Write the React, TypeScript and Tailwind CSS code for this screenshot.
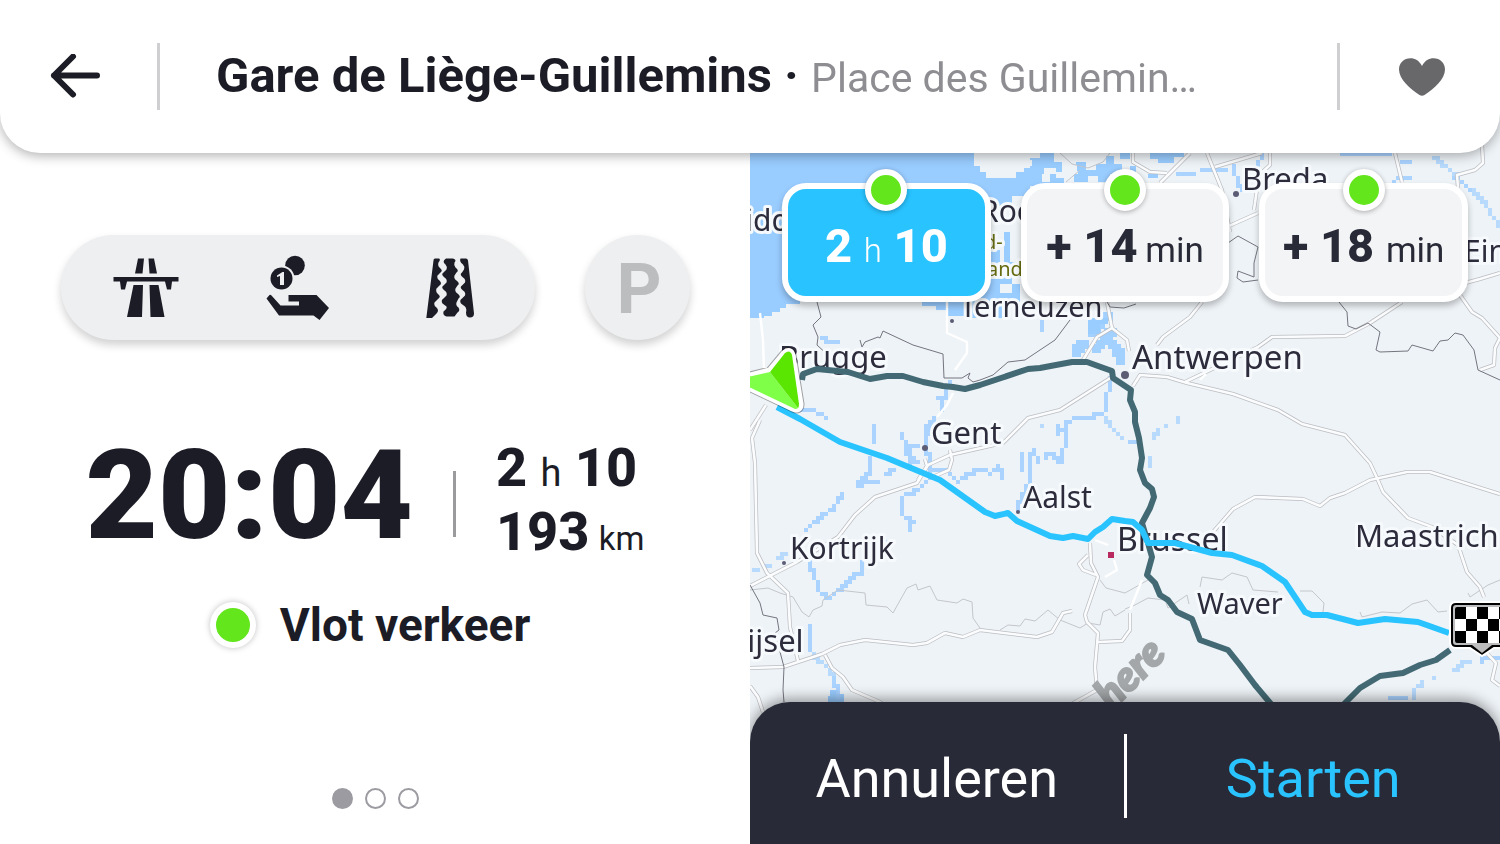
import { useState } from "react";

const CELL = 4;

// Walks along a line and snaps every step to a coarse grid, like the water tiles
function waterCells(line: string, size: number) {
  const pts = line.split(" ").map((p) => p.split(",").map(Number));
  const cells = new Set<string>();
  for (let i = 0; i < pts.length - 1; i++) {
    const [x1, y1] = pts[i];
    const [x2, y2] = pts[i + 1];
    const steps = Math.max(1, Math.ceil(Math.hypot(x2 - x1, y2 - y1) / 3));
    for (let s = 0; s <= steps; s++) {
      const x = x1 + ((x2 - x1) * s) / steps;
      const y = y1 + ((y2 - y1) * s) / steps;
      cells.add(`${Math.floor(x / CELL) * CELL} ${Math.floor(y / CELL) * CELL}`);
    }
  }
  return [...cells].map((c) => `M${c}h${size}v${size}h-${size}z`).join("");
}

const rivers = [
  "1110,379 1107,395 1106,411 1090,418 1070,420",
  "1056,424 1058,432 1066,430 1068,422",
  "1067,422 1066,443 1062,452 1060,462 1052,452 1046,452 1046,458",
  "1032,450 1030,480 1022,498 1017,508",
  "963,478 972,472 983,468 990,474 997,466 1003,476",
  "1020,468 1023,455",
  "1033,450 1038,460",
  "929,420 925,440 928,455 930,477 917,490 900,498 903,515 912,520 910,530",
  "902,433 907,453 917,460 908,464",
  "892,470 887,475",
  "916,444 906,450 910,458",
  "930,470 945,470 958,480",
  "875,427 873,440",
  "870,456 868,473 857,485 877,482",
  "949,383 944,396",
  "934,416 930,432",
  "843,495 832,510 817,520 805,530",
  "810,563 820,593 828,598 845,585 860,572 863,563",
  "808,625 810,650",
  "835,677 837,698",
  "803,410 812,410 827,418",
  "822,338 830,343 836,343",
  "936,396 942,396 943,408",
  "1129,441 1138,441",
  "1455,178 1462,180 1470,190",
  "1235,165 1236,178 1242,190",
  "1262,153 1255,170",
  "1178,175 1195,175",
  "1202,171 1224,169",
  "1340,154 1388,154",
  "1400,162 1411,163",
  "1394,180 1410,178",
  "1391,697 1404,697",
  "1480,660 1500,658",
  "1040,322 1041,330",
];

const streams = [
  "787,552 778,558",
  "768,564 766,566",
  "755,570 757,571",
  "880,548 890,540",
  "1104,416 1112,428",
  "1118,434 1120,436",
  "812,655 827,667 835,677",
  "1152,438 1158,430",
  "1165,426 1167,424",
  "1176,418 1177,420",
  "1040,424 1042,426",
  "1432,156 1445,166 1456,174",
  "1470,190 1484,203 1496,222 1500,226",
  "1468,660 1455,670",
  "1435,676 1433,678",
  "1422,683 1414,688 1412,696",
  "1149,458 1150,464",
];

const estuary = [
  "1072,348 1080,340",
  "1088,330 1096,322",
  "1100,312 1104,314",
  "1094,344 1104,338 1114,346 1118,356",
  "1102,332 1108,330",
];

const roads = [
  "1112,377 1060,410 1028,418 1003,443 950,455 928,465 917,483 875,497 855,515 838,537 797,562 750,586",
  "950,450 952,460 949,470 935,476",
  "925,459 927,466 918,480",
  "760,420 752,438 755,463 757,553 767,573 788,593 790,627 798,661",
  "750,430 766,405",
  "750,668 783,667 822,654 840,645 865,640 913,645 927,643 945,633 963,637 980,630 1037,637 1052,632 1063,613 1072,611",
  "825,655 832,668 843,677 852,690 880,702 890,710",
  "750,686 758,697 763,712",
  "1090,543 1091,563 1098,577 1085,615 1087,622 1098,633 1095,667 1097,690 1070,705",
  "1088,555 1079,564 1083,570 1096,575",
  "1098,642 1122,641 1130,630 1130,613",
  "1133,386 1140,375 1167,377 1187,383 1233,394 1278,410 1302,424 1345,435 1370,463 1377,478 1383,492 1408,518 1432,527 1458,545 1467,572 1480,587 1484,597",
  "1213,532 1233,509 1255,497 1303,499 1320,506 1330,498 1345,493 1370,480 1407,472 1430,472 1500,494",
  "1185,382 1258,347 1272,337 1345,336 1370,323 1402,302",
  "1157,345 1163,337 1190,317 1202,302",
  "1460,295 1472,312 1482,318 1500,338 1495,348 1494,365 1480,370",
  "1465,283 1480,279 1500,273",
  "1207,153 1222,190 1230,232",
  "1229,226 1258,213",
  "1270,153 1270,165 1259,175 1254,210",
  "1482,145 1483,163 1475,170 1457,175 1458,188",
  "1395,153 1402,182",
  "1133,153 1133,162 1150,172 1167,173",
  "1160,183 1190,153",
  "1215,167 1262,153",
  "1107,302 1112,328 1097,337 1083,360",
  "1112,328 1127,340 1129,351",
  "1484,650 1496,663 1492,680 1500,686",
];

const whiteRoads = [
  "947,302 947,333 967,342 967,353 955,370",
  "953,393 947,405 937,417",
  "760,313 763,340 764,370",
  "1200,380 1206,374",
  "1095,540 1108,545",
  "1130,610 1142,580",
  "1105,577 1117,570 1114,560",
];

const borders = [
  "817,302 821,317 813,325 818,337 817,345 830,357",
  "860,340 862,347 865,342 878,337 880,338 883,331 913,345 943,354 944,378 962,378 970,373 968,378 973,382 980,380 993,375 1008,362 1025,360 1055,340 1070,320",
  "1107,302 1110,307 1124,308 1136,304",
  "1339,302 1347,312 1348,326 1356,329 1368,323 1380,332 1376,350 1380,352 1408,351 1412,345 1433,351 1440,341 1448,340 1455,333 1463,335 1474,350 1478,370 1500,380",
  "1228,243 1238,236 1258,247 1254,263 1254,277 1238,271 1237,278 1243,282 1258,280",
  "750,585 760,603 763,615 777,618 779,630 775,633 784,667 783,690 784,702",
];

const provinces = [
  "1060,153 1072,164 1088,168 1103,162 1110,153",
  "1066,182 1080,170",
  "750,590 768,588 780,593 793,597 802,612 809,617 813,610 822,606 823,600 838,590 865,593 866,605 887,607 893,613 907,588 916,584 918,590 930,586 937,600 957,603 963,599 972,602 973,618 980,628",
  "1000,630 1008,625 1020,626 1025,619 1035,621 1048,610 1060,620 1080,628 1088,623 1100,625 1103,612 1110,609 1115,616 1125,610",
  "1100,580 1106,588 1125,593 1148,580",
  "1125,609 1135,605 1148,598 1165,600 1168,608 1187,595 1189,604",
  "1200,587 1202,577 1222,580 1232,573 1247,577 1253,590 1278,592",
  "1300,591 1312,591 1324,603 1323,612",
  "1360,612 1362,617 1382,612 1400,613 1412,604 1427,600 1438,612 1447,611",
  "1468,593 1470,597 1488,585 1500,580",
];

const altRoutes = [
  "802,380 803,374 817,369 848,372 870,379 887,376 903,376 923,382 943,386 953,387 965,389 980,385 1028,369 1040,368 1072,362 1087,362 1112,371 1113,378 1125,386 1131,390 1130,400 1135,412 1135,422 1139,438 1142,458 1140,470 1145,483 1152,489 1154,497 1150,508 1142,523 1148,543 1152,557 1147,575 1155,583 1160,595 1168,600 1177,612 1192,619 1200,640 1228,650 1240,665 1255,685 1276,710",
  "1338,710 1360,688 1380,676 1403,673 1420,665 1436,660 1450,650",
];

const mainRoute =
  "777,407 800,419 840,442 887,458 940,480 985,512 995,516 1008,513 1017,521 1050,536 1063,538 1073,536 1088,539 1095,532 1103,527 1112,519 1125,521 1133,522 1142,530 1148,543 1175,543 1212,553 1232,555 1262,566 1285,582 1305,612 1312,615 1327,615 1358,623 1385,619 1418,622 1449,633";

const cities = [
  { name: "Midd", x: 718, y: 231, size: 30 },
  { name: "Roo", x: 980, y: 222, size: 30 },
  { name: "Breda", x: 1242, y: 190, size: 31 },
  { name: "Ein", x: 1464, y: 262, size: 30 },
  { name: "Terneuzen", x: 960, y: 317, size: 29 },
  { name: "Brugge", x: 779, y: 368, size: 31 },
  { name: "Antwerpen", x: 1132, y: 369, size: 33 },
  { name: "Gent", x: 931, y: 444, size: 31 },
  { name: "Aalst", x: 1023, y: 508, size: 30 },
  { name: "Kortrijk", x: 790, y: 559, size: 30 },
  { name: "Brussel", x: 1117, y: 551, size: 32 },
  { name: "Maastrich", x: 1355, y: 547, size: 31 },
  { name: "Waver", x: 1197, y: 614, size: 29 },
  { name: "Rijsel", x: 728, y: 652, size: 31 },
];

const cityDots = [
  [1236, 194, 3],
  [952, 321, 2],
  [1125, 375, 4],
  [925, 448, 3],
  [1018, 512, 2],
  [784, 563, 2],
];

function RouteMap() {
  return (
    <svg
      viewBox="750 113 750 731"
      preserveAspectRatio="xMidYMid slice"
      className="absolute inset-0 h-full w-full"
      role="img"
      aria-label="Routekaart"
    >
      <rect x="0" y="0" width="2250" height="1200" fill="#eef3f7" />

      {/* Sea and estuaries */}
      <g fill="#99ccff" shapeRendering="crispEdges">
        <path d="M0 0H978V160H974V166H980V172H986V178H1000V172H1024V168H1030V158H1040V153H1054V162H1062V172H1056V178H1064V186H1030V196H1012V206H990V250H1000V276H1012V284H1020V302H1002V318H964V316H948V310H936V306H922V296H800V304H786V308H780V312H772V316H764V318H0Z" />
        <path d="M1004 232h6v30h6v6h-12z" />
        <path d="M1076 162h10v8h10v-6h10v-8h8v8h8v8h6v10h-10v-8h-8v8h-12v-6h-10v6h-14v-8h4z" />
        <path d="M1120 153h10v6h-10zM1150 153h34v4h-10v6h-16v-4h-8zM1148 174h10v4h-10zM1130 166h6v10h-6z" />
        <path d="M1088 318h20v6h-8v10h-12z" />
        <path d="M830 690h8v4h6v8h-16v-6h2z" />
      </g>
      <g fill="#eef3f7" shapeRendering="crispEdges">
        <path d="M974 153H1026V160H1032V166H1022V172H1016V178H1000V174H992V170H982V164H974Z" />
        <path d="M1044 168h12v6h-6v8h-8v-8h2z" />
        <path d="M1012 228h8v34h-8z M1000 284h12v9h-12z" />
      </g>

      <g fill="#a3d0ff" opacity="0.9">
        {rivers.map((r) => (
          <path key={r} d={waterCells(r, 4)} />
        ))}
        {streams.map((r) => (
          <path key={r} d={waterCells(r, 4)} opacity="0.8" />
        ))}
        {estuary.map((r) => (
          <path key={r} d={waterCells(r, 9)} fill="#99ccff" />
        ))}
      </g>

      <g fill="none" strokeLinejoin="round">
        {provinces.map((p) => (
          <polyline key={p} points={p} stroke="#c3c6cc" strokeWidth="1" />
        ))}
        {roads.map((p) => (
          <polyline key={p} points={p} stroke="#bbbcc0" strokeWidth="4" />
        ))}
        {roads.map((p) => (
          <polyline key={p} points={p} stroke="#fbfcfd" strokeWidth="2.6" />
        ))}
        {whiteRoads.map((p) => (
          <polyline key={p} points={p} stroke="#ffffff" strokeWidth="2.4" />
        ))}
        {borders.map((p) => (
          <polyline key={p} points={p} stroke="#74747f" strokeWidth="1" />
        ))}
      </g>

      {/* Place names */}
      {cityDots.map(([x, y, r]) => (
        <circle key={x} cx={x} cy={y} r={r} fill="#5c5c74" />
      ))}
      <rect x="1108" y="552" width="6" height="6" fill="#b8295f" />
      <g
        className="font-['Noto_Sans','Open_Sans',sans-serif]"
        fill="#2c2c3d"
        stroke="#f7fafc"
        strokeWidth="6"
        strokeLinejoin="round"
        paintOrder="stroke"
      >
        <text x="984" y="249" fontSize="20" fill="#666b10">d-</text>
        <text x="987" y="276" fontSize="20" fill="#666b10">and</text>
        {cities.map((c) => (
          <text key={c.name} x={c.x} y={c.y} fontSize={c.size}>
            {c.name}
          </text>
        ))}
      </g>

      <text
        transform="translate(1112 711) rotate(-45)"
        className="font-[Lato,'Open_Sans',sans-serif] italic"
        fontSize="42"
        fontWeight="900"
        fill="#a4a7a9"
        stroke="#a4a7a9"
        strokeWidth="2"
      >
        here
      </text>

      {/* Routes */}
      <g fill="none" strokeWidth="6" strokeLinejoin="round">
        {altRoutes.map((p) => (
          <polyline key={p} points={p} stroke="#436a74" />
        ))}
        <polyline points={mainRoute} stroke="#29c3ff" />
      </g>

      {/* Current position */}
      <g strokeLinejoin="round">
        <path d="M734 380L770 371L785 353Q790 349 792 355L800 404Q800 411 793 408Z" fill="#ffffff" stroke="#00000055" strokeWidth="9" />
        <path d="M734 380L770 371L785 353Q790 349 792 355L800 404Q800 411 793 408Z" fill="#ffffff" stroke="#ffffff" strokeWidth="7" />
        <path d="M734 380L770 372L798 408Q796 410 793 408Z" fill="#7fff47" />
        <path d="M770 372L785 353Q790 349 792 355L799 404Q799 407 798 408Z" fill="#5ae600" />
      </g>

      {/* Destination */}
      <g>
        <path d="M1456 602h56v46h-18l-12 8l-12-8h-14q-6 0-6-6v-34q0-6 6-6z" fill="#000000" stroke="#ffffff" strokeWidth="2" />
        <path d="M1472 645h20l-10 8z" fill="#bdbdbd" />
        <rect x="1453" y="605" width="60" height="40" rx="3" fill="#bdbdbd" />
        <rect x="1455" y="607" width="60" height="36" rx="2" fill="#ffffff" />
        <path d="M1457 607h9v12h-11v-10q0-2 2-2zM1477 607h11v12h-11zM1499 607h11v12h-11zM1466 619h11v12h-11zM1488 619h11v12h-11zM1455 631h11v12h-9q-2 0-2-2zM1477 631h11v12h-11zM1499 631h11v12h-11z" fill="#000000" />
      </g>
    </svg>
  );
}

function MotorwayIcon() {
  return (
    <svg width="66" height="60" viewBox="0 0 66 60" fill="#1c1c26" aria-hidden="true">
      <path d="M25 0.500h6l-1.500 15h-7.500zM35.500 0.500h5.500l3 15h-7.500z" />
      <path d="M0.500 19h65v4.500h-6.500l-1 8h-4l-2-8h-38l-2 8h-4l-1-8h-6.500z" />
      <path d="M20.500 27h9.500l-1 32h-15zM36.500 27h9l6 32h-14z" />
    </svg>
  );
}

function TollIcon() {
  return (
    <svg width="64" height="66" viewBox="0 0 64 66" fill="#1c1c26" aria-hidden="true">
      <circle cx="29" cy="10.500" r="9.800" />
      <circle cx="15.500" cy="23.500" r="13" fill="#eeeff1" />
      <circle cx="15.500" cy="23.500" r="11" />
      <path d="M11 20.500l5.500-3.500h1.500v13h-4v-9l-3 1z" fill="#eeeff1" />
      <path d="M0.500 43.500l3-3.500q1-.5 2 .5l9 10h18.500v-4h-10.500v-6.500h28l12.500 13l-9.500 12l-6-4.500h-34.500z" />
    </svg>
  );
}

function UnpavedIcon() {
  return (
    <svg width="50" height="60" viewBox="0 0 50 60" fill="#1c1c26" aria-hidden="true">
      <path d="M10 .5h4q2 1-.5 4q-1 3 1 5q4 3 1 5l-3 3q-1 3 2 5q3 3 0 5l-3 3q-1 3 1 5q4 3 1 5l-4 4q-1 3 2 5q3 3 0 6l-6 6q-5 1-4-3l7-56q0-2 1.500-2z" />
      <path d="M21 .5h7q4 1 1.500 4q-1 3 1 5q4 3 1 5l-2 3q-1 3 2 5q4 3 1 5l-2 3q-1 3 2 5q4 3 1 5l-2 4q-1 3 2 5q2 3-1 5l-3 4h-8q-4-1-3-5q4-3 3-5l-4-3q-2-3 1-5l3-3q1-3-2-5q-4-3-1-5l3-3q1-3-2-5q-4-3-1-5l3-3q1-3-1-5q-4-3 .500-6z" />
      <path d="M35.500 .5h5.500q1.500 0 2 2l6 53q0 4-4 4q-4 0-4-5q1-4-1-6l-4-3q-2-3 1-5l3-3q1-3-2-5q-4-3-1-5l3-3q1-3-2-5q-4-3-1-5l2-3q1-3-1-5q-4-3-2.500-6z" />
    </svg>
  );
}

const avoidOptions = [
  { label: "Snelwegen", icon: <MotorwayIcon /> },
  { label: "Tolwegen", icon: <TollIcon /> },
  { label: "Onverharde wegen", icon: <UnpavedIcon /> },
];

export default function App() {
  const [route, setRoute] = useState(0);

  const chip =
    "relative h-[119px] rounded-3xl border-[6px] border-white pt-2 text-center text-[47px] font-extrabold whitespace-nowrap shadow-[0_4px_6px_rgba(0,0,0,0.25)]";
  const chipColor = (i: number) =>
    i === route ? "bg-[#29c3ff] text-white" : "bg-[#f3f4f6] text-[#292a37]";
  const dot = (
    <span className="absolute -top-5 left-1/2 size-[42px] -translate-x-1/2 rounded-full border-[6px] border-white bg-[#63e61c] shadow-[0_1px_5px_rgba(0,0,0,0.3)]" />
  );

  return (
    <div className="flex min-h-screen flex-col bg-white font-[Roboto,sans-serif] text-[#1c1c26]">
      {/* Header */}
      <header className="relative z-10 flex h-[153px] items-center rounded-b-[40px] bg-white shadow-[0_3px_12px_rgba(0,0,0,0.3)]">
        <button aria-label="Terug" className="flex w-[157px] shrink-0 justify-center pr-2">
          <svg width="52" height="46" viewBox="0 0 52 46" fill="none" stroke="#1c1c26" strokeWidth="6" strokeLinecap="round" strokeLinejoin="round" aria-hidden="true">
            <path d="M48 21.500H5M24 2.500L5 21.500L24 40.500" />
          </svg>
        </button>
        <div className="h-[67px] w-[3px] shrink-0 bg-[#cfcfd1]" />
        <h1 className="min-w-0 flex-1 truncate pl-[56px] text-[49px] leading-[60px] font-bold">
          Gare de Liège-Guillemins ·{" "}
          <span className="text-[41px] font-normal text-[#8d8d92]">Place des Guillemin…</span>
        </h1>
        <div className="h-[67px] w-[3px] shrink-0 bg-[#cfcfd1]" />
        <button aria-label="Favoriet" className="flex w-[160px] shrink-0 justify-center pl-1">
          <svg width="46" height="38" viewBox="0 0 46 38" fill="#68686b" aria-hidden="true">
            <path d="M23 8C20 2.500 16 .3 11.500 .3C5 .3 0 5 0 11.500C0 21 11 31 20.500 37Q23 38.500 25.500 37C35 31 46 21 46 11.500C46 5 41 .3 34.500 .3C30 .3 26 2.500 23 8Z" />
          </svg>
        </button>
      </header>

      <main className="flex flex-1">
        {/* Trip summary */}
        <section className="flex w-1/2 flex-col items-center pt-[82px] pb-[35px]">
          <div className="flex gap-[50px]">
            <div className="flex h-[105px] w-[474px] items-center justify-center rounded-full bg-[#eeeff1] shadow-[0_5px_8px_rgba(0,0,0,0.18)]">
              {avoidOptions.map((o) => (
                <button key={o.label} aria-label={o.label} className="flex h-full w-[152px] items-center justify-center">
                  {o.icon}
                </button>
              ))}
            </div>
            <button className="size-[105px] rounded-full bg-[#eeeff1] pt-[2px] pl-1 text-[70px] font-bold text-[#bbbdbf] shadow-[0_5px_8px_rgba(0,0,0,0.18)]">
              P
            </button>
          </div>

          <div className="mt-[88px] flex items-center gap-10 pr-5">
            <p className="text-[125px] leading-[128px] font-black">20:04</p>
            <div className="mt-4 h-[66px] w-[3px] bg-[#9b9b9d]" />
            <div className="mt-2 text-[54px] leading-[64px] font-extrabold">
              <p>
                2 <span className="text-[38px] leading-none font-normal">h</span> 10
              </p>
              <p>
                193 <span className="-ml-1 text-[33px] leading-none font-normal">km</span>
              </p>
            </div>
          </div>

          <div className="mt-[34px] flex items-center gap-6 pr-[10px]">
            <span className="size-[46px] rounded-full border-[6px] border-white bg-[#63e61c] shadow-[0_0_6px_rgba(0,0,0,0.25)]" />
            <p className="text-[46px] leading-[54px] font-bold">Vlot verkeer</p>
          </div>

          <div className="mt-auto flex gap-3">
            <span className="size-[21px] rounded-full bg-[#9b9ba1]" />
            <span className="size-[21px] rounded-full border-2 border-[#9b9ba1]" />
            <span className="size-[21px] rounded-full border-2 border-[#9b9ba1]" />
          </div>
        </section>

        {/* Map */}
        <section className="relative -mt-10 flex w-1/2 flex-col justify-between overflow-hidden">
          <RouteMap />
          <div className="relative grid grid-cols-3 gap-[30px] px-8 pt-[70px]">
            <button className={`${chip} ${chipColor(0)}`} onClick={() => setRoute(0)}>
              {dot}2 <span className="text-[33px] font-light">h</span> 10
            </button>
            <button className={`${chip} ${chipColor(1)}`} onClick={() => setRoute(1)}>
              {dot}+ 14 <span className="-ml-1 text-[35px] font-normal">min</span>
            </button>
            <button className={`${chip} ${chipColor(2)}`} onClick={() => setRoute(2)}>
              {dot}+ 18 <span className="text-[35px] font-normal">min</span>
            </button>
          </div>

          <div className="relative flex h-[142px] items-center rounded-t-[40px] bg-[#292a37] text-[54px] shadow-[0_-3px_14px_rgba(0,0,0,0.4)]">
            <button className="flex-1 pt-[10px] text-white">Annuleren</button>
            <div className="mt-[6px] h-[84px] w-[3px] bg-white" />
            <button className="flex-1 pt-[10px] text-[#29c3ff]">Starten</button>
          </div>
        </section>
      </main>
    </div>
  );
}
